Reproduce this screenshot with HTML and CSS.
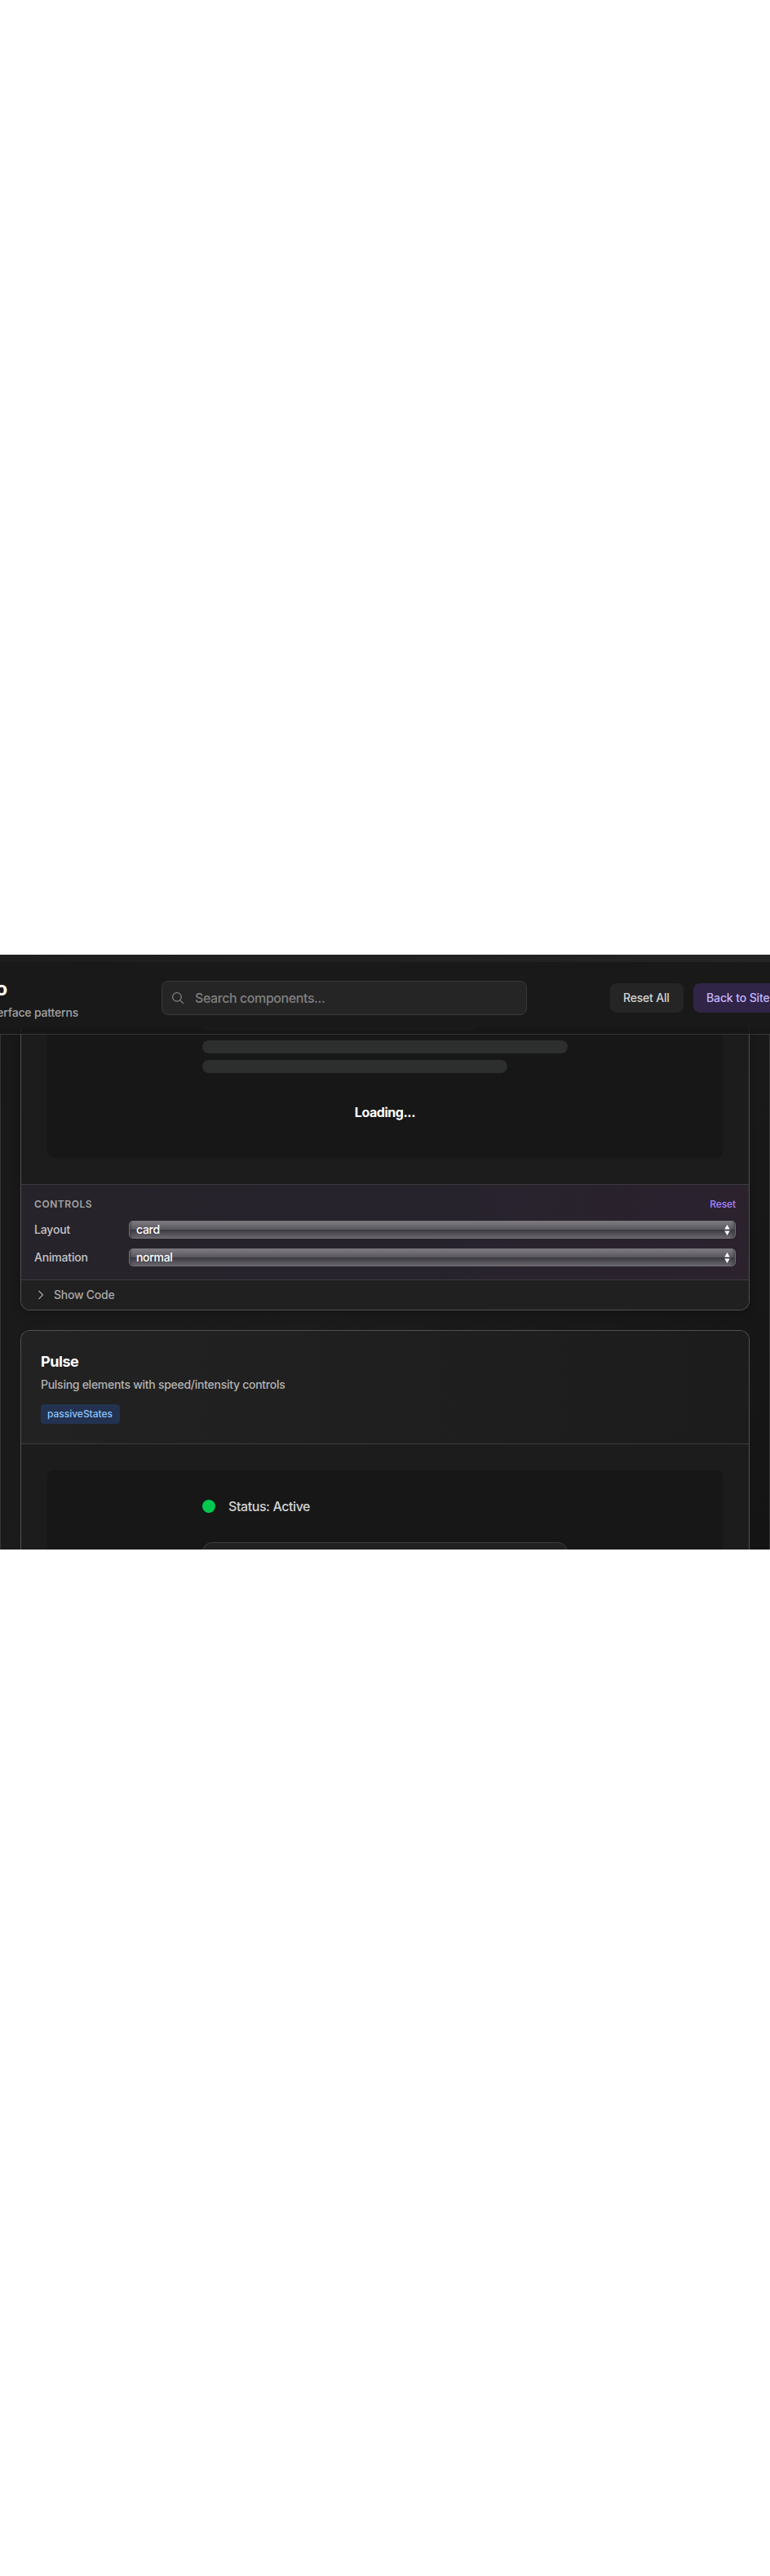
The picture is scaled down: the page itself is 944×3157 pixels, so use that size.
FILE: index.html
```html
<!DOCTYPE html>
<html lang="en">
<head>
<meta charset="utf-8">
<title>Interface patterns</title>
<link rel="stylesheet" href="styles.css">
</head>
<body>
<main class="page">
  <div class="strip"></div>
  <header class="header">
    <div class="brand">
      <div class="brand-title"><span>o</span></div>
      <div class="brand-sub"><span>erface patterns</span></div>
    </div>
    <div class="search">
      <svg class="search-icon" viewBox="0 0 16 16"><circle cx="6.9" cy="6.9" r="5.3"/><path d="M10.8 10.8 14.6 14.6"/></svg>
      <span class="search-text">Search components...</span>
    </div>
    <div class="actions">
      <div class="btn btn-reset"><span>Reset All</span></div>
      <div class="btn btn-back"><span>Back to Site</span></div>
    </div>
  </header>
  <section class="list">
    <article class="card card-top">
      <div class="demo">
        <div class="stage stage-loading">
          <div class="bar"></div>
          <div class="bar bar-short"></div>
          <div class="loading">Loading...</div>
        </div>
      </div>
      <div class="controls">
        <div class="controls-head"><span class="controls-title">CONTROLS</span><span class="reset">Reset</span></div>
        <div class="row"><span class="label">Layout</span><div class="select"><span>card</span><svg class="arrows" viewBox="0 0 7 13"><path d="M3.5 0 6.7 5.4H.3zM3.5 13 6.7 7.6H.3z"/></svg></div></div>
        <div class="row"><span class="label">Animation</span><div class="select"><span>normal</span><svg class="arrows" viewBox="0 0 7 13"><path d="M3.5 0 6.7 5.4H.3zM3.5 13 6.7 7.6H.3z"/></svg></div></div>
      </div>
      <div class="code"><svg class="chevron" viewBox="0 0 8 12"><path d="M1.5 1 6.5 6 1.5 11"/></svg><span>Show Code</span></div>
    </article>
    <article class="card card-bottom">
      <div class="card-head">
        <h2 class="title">Pulse</h2>
        <p class="desc">Pulsing elements with speed/intensity controls</p>
        <span class="tag">passiveStates</span>
      </div>
      <div class="demo demo-pulse">
        <div class="stage stage-pulse">
          <div class="status"><i class="dot"></i><span>Status: Active</span></div>
          <div class="box"></div>
        </div>
      </div>
    </article>
  </section>
</main>
</body>
</html>
```
FILE: styles.css
```css
* { box-sizing: border-box; }
body { margin: 0; background: #fff; font-family: Inter, "Liberation Sans", sans-serif; font-size: 14px; font-weight: 450; letter-spacing: -.18px; line-height: 20px; height: 3157px; padding-top: 1170px; overflow-x: hidden; }
.page { height: 729px; overflow: hidden; background: linear-gradient(135deg, #181818, #1b1b1b 50%, #141414); display: flex; flex-direction: column; }
.strip { height: 9px; flex: none; background: linear-gradient(90deg, #1e1e1e, #242424); }
.header {
  height: 89px; flex: none; border-bottom: 1px solid #383838;
  display: grid; grid-template-columns: 198px 448px 1fr; align-items: start; overflow: hidden; white-space: nowrap;
  background:
    linear-gradient(#222, #222) 25px 100% / 1px 8px no-repeat,
    linear-gradient(#222, #222) 918px 100% / 1px 8px no-repeat,
    linear-gradient(#1b1b1b, #1b1b1b) 250px 80px / 331px 3px no-repeat,
    linear-gradient(#171717, #171717) 0 100% / 100% 8px no-repeat,
    #191919;
}
.brand { padding-top: 17px; }
.brand-title { height: 32px; width: 9px; display: flex; justify-content: flex-end; font-size: 24px; line-height: 32px; font-weight: 700; color: #fff; }
.brand-sub { margin-top: 3px; width: 96px; display: flex; justify-content: flex-end; color: #a3a3a3; }
.search { margin-top: 23px; height: 42px; border: 1px solid #383838; border-radius: 8px; background: #252525; display: flex; align-items: center; padding-left: 11px; }
.search-icon { width: 16px; height: 16px; margin-right: 13px; fill: none; stroke: #858585; stroke-width: 1.2; stroke-linecap: round; }
.search-text { font-size: 16px; letter-spacing: -.42px; color: #808080; }
.actions { margin: 26px 0 0 101.5px; display: flex; gap: 12px; }
.btn { height: 36px; border-radius: 8px; flex: none; display: flex; align-items: center; padding-left: 16.5px; font-weight: 550; letter-spacing: -.2px; }
.btn-reset { width: 90px; background: #252525; color: #d4d4d4; }
.btn-back { width: 120px; background: #302447; color: #c4b5fd; letter-spacing: -.12px; }
.list { flex: 1; min-height: 0; border: solid #353535; border-width: 0 1px; padding: 0 24px; }
.card { border: 1px solid #505050; background: #1c1c1c; overflow: hidden; }
.card-top { border-top: 0; border-radius: 0 0 12px 12px; height: 338px; box-shadow: 0 4px 12px rgba(0,0,0,.2); }
.demo { height: 183px; padding: 0 32px 32px; }
.stage { background: #171717; padding: 0 190px; }
.stage-loading { height: 151px; border-radius: 0 0 8px 8px; padding-top: 7px; }
.bar { height: 16px; border-radius: 8px; background: #2d2f2e; margin-bottom: 8px; }
.bar-short { width: 373.5px; }
.loading { padding-top: 28px; text-align: center; font-size: 16px; line-height: 24px; font-weight: 650; letter-spacing: -.45px; color: #fff; }
.controls { height: 118px; border: solid #3b3b3b; border-width: 1px 0; background: linear-gradient(90deg, #26232a, #26232d 50%, #2b222e); padding: 16px 16px 0; }
.controls-head { display: flex; justify-content: space-between; height: 16px; font-size: 12px; line-height: 16px; margin-bottom: 12px; }
.controls-title { font-weight: 600; letter-spacing: .55px; color: #a3a3a3; }
.reset { font-weight: 500; letter-spacing: -.1px; color: #a684ff; }
.row { display: flex; align-items: center; height: 22px; margin-bottom: 12px; }
.label { width: 116px; font-weight: 550; color: #c4c4c7; }
.select { flex: 1; height: 22px; border: 1px solid #737177; border-radius: 5px; background: linear-gradient(#7d7b80, #5a585f 48%, #3c3a41 52%, #68666c); box-shadow: inset 4px -1px 3px -3px #3c3a41, inset -4px -1px 3px -3px #3c3a41; display: flex; align-items: center; justify-content: space-between; padding: 0 6px 0 8px; color: #fff; letter-spacing: -.3px; }
.arrows { width: 7px; height: 13px; fill: #fff; }
.code { height: 36px; display: flex; align-items: center; gap: 12px; padding-left: 20px; color: #a8a8a8; background: #202020; letter-spacing: -.25px; }
.chevron { width: 8px; height: 12px; fill: none; stroke: #a8a8a8; stroke-width: 1.2; }
.card-bottom { margin-top: 24px; height: 300px; border-radius: 12px 12px 0 0; border-bottom: 0; }
.card-head { height: 139px; padding: 24px 24px 0; border-bottom: 1px solid #3b3b3b; background: linear-gradient(90deg, #222, #1c1c1c); }
.title { margin: 0; font-size: 18px; line-height: 28px; font-weight: 650; letter-spacing: -.45px; color: #fff; }
.desc { margin: 4px 0 14px; color: #b3b3b3; letter-spacing: -.27px; }
.tag { display: block; width: 97px; height: 24px; border-radius: 4px; background: #233250; color: #8ec5ff; font-size: 12px; line-height: 24px; padding-left: 8px; font-weight: 500; letter-spacing: -.02px; }
.demo-pulse { padding: 32px 32px 0; height: 160px; }
.stage-pulse { height: 128px; border-radius: 8px 8px 0 0; padding-top: 36px; }
.status { display: flex; align-items: center; gap: 16px; height: 16px; font-size: 16px; letter-spacing: -.42px; color: #d4d4d4; }
.dot { width: 16px; height: 16px; border-radius: 50%; background: #00c950; }
.box { margin-top: 36px; height: 60px; border: 1px solid #3b3b3b; border-radius: 12px; background: #222; }
```
